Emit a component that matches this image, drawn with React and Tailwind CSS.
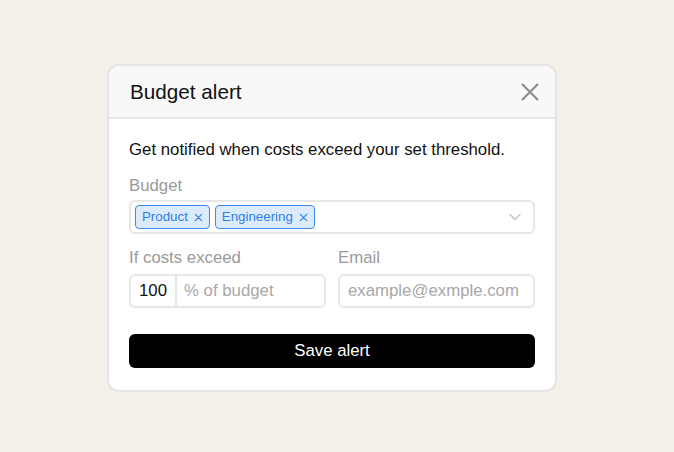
import React from 'react';

const XIcon = ({ className }) => (
  <svg viewBox="0 0 10 10" className={className} fill="none" stroke="currentColor" strokeWidth="1.3" strokeLinecap="round">
    <path d="M1.5 1.5l7 7M8.5 1.5l-7 7" />
  </svg>
);

const Chip = ({ label }) => (
  <span className="inline-flex items-center gap-[6px] h-6 pl-[6px] pr-[6px] rounded-[4px] border border-[#3b8beb] bg-[#dcebfc] text-[13.3px] text-[#2f80e4]">
    {label}
    <XIcon className="w-[9px] h-[9px]" />
  </span>
);

const App = () => {
  return (
    <div
      className="w-[674px] h-[452px] bg-[#f5f1ea] flex items-start pl-[107px] pt-[64px]"
      style={{ fontFamily: '"Liberation Sans", Arial, sans-serif' }}
    >
      <div className="w-[450px] bg-white border-2 border-[#e4e4e4] rounded-[12px] overflow-hidden">
        {/* Header */}
        <div className="h-[53px] bg-[#f8f8f8] border-b-2 border-[#e4e4e4] flex items-center justify-between pl-[21px] pr-[11px]">
          <h2 className="text-[20.7px] text-[#111]">Budget alert</h2>
          <button type="button" className="text-[#8a8a8a] p-1">
            <svg viewBox="0 0 20 20" className="w-[20px] h-[20px]" fill="none" stroke="currentColor" strokeWidth="2" strokeLinecap="round">
              <path d="M2.5 2.5l15 15M17.5 2.5l-15 15" />
            </svg>
          </button>
        </div>

        {/* Body */}
        <div className="px-5 pt-[19px] pb-[22px] text-[16.8px] leading-6">
          <p className="text-[#111]">Get notified when costs exceed your set threshold.</p>

          <label className="block mt-3 text-[#9a9a9a]">Budget</label>
          <div className="mt-[2px] h-[34px] border-2 border-[#e6e6e6] rounded-[6px] flex items-center pl-1 pr-3 gap-[5px]">
            <Chip label="Product" />
            <Chip label="Engineering" />
            <svg viewBox="0 0 12 8" className="ml-auto w-[12px] h-[8px] text-[#c4c4c4]" fill="none" stroke="currentColor" strokeWidth="1.4" strokeLinecap="round" strokeLinejoin="round">
              <path d="M1 1.5l5 5 5-5" />
            </svg>
          </div>

          <div className="mt-3 grid grid-cols-2 gap-3">
            <div>
              <label className="block text-[#9a9a9a]">If costs exceed</label>
              <div className="mt-1 h-[34px] border-2 border-[#e6e6e6] rounded-[6px] flex items-center">
                <span className="w-[46px] h-full flex items-center justify-center border-r-2 border-[#e6e6e6] text-[#111]">100</span>
                <span className="pl-[7px] text-[#a8a8a8]">% of budget</span>
              </div>
            </div>
            <div>
              <label className="block text-[#9a9a9a]">Email</label>
              <div className="mt-1 h-[34px] border-2 border-[#e6e6e6] rounded-[6px] flex items-center px-2 text-[#a8a8a8]">
                example@exmple.com
              </div>
            </div>
          </div>

          <button type="button" className="mt-[26px] w-full h-[34px] bg-black text-white rounded-[6px] text-[16.8px]">
            Save alert
          </button>
        </div>
      </div>
    </div>
  );
};

export default App;
